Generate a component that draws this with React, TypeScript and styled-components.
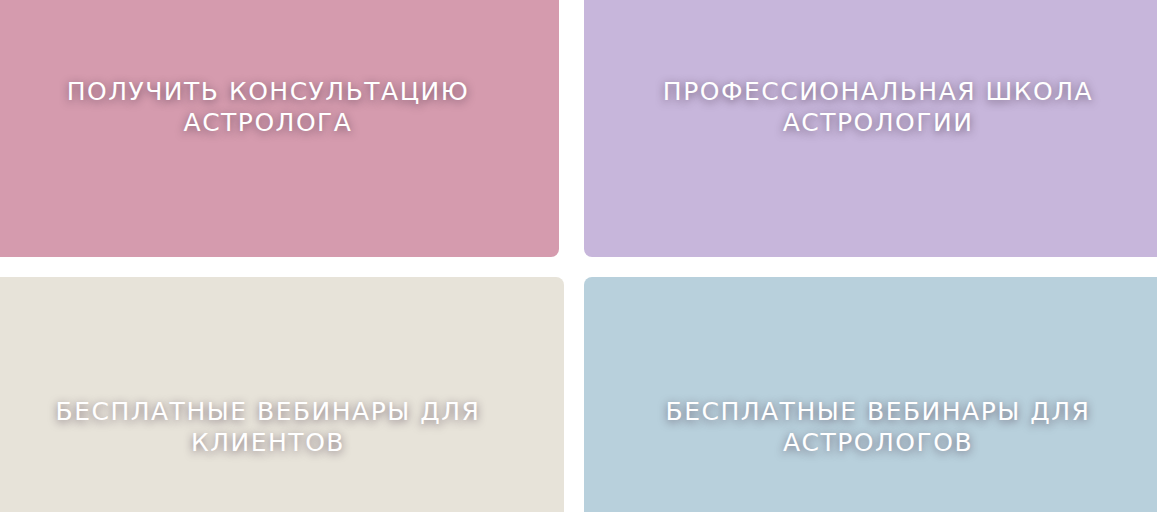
import styled, { createGlobalStyle } from "styled-components";

const GlobalStyle = createGlobalStyle`
  html, body {
    margin: 0;
    padding: 0;
    overflow: hidden;
    background: #ffffff;
  }
`;

const cards = [
  { title: "Получить консультацию астролога", color: "#d59bae", trim: "0 25px 0 5px" },
  { title: "Профессиональная школа астрологии", color: "#c7b6db", trim: "0" },
  { title: "Бесплатные вебинары для клиентов", color: "#e7e3d9", trim: "0 20px 0 0" },
  { title: "Бесплатные вебинары для астрологов", color: "#b8d0dc", trim: "0" },
];

export default function App() {
  return (
    <>
      <GlobalStyle />
      <Grid>
        {cards.map((c) => (
          <Card key={c.title} $color={c.color} $trim={c.trim}>
            <Title>{c.title}</Title>
          </Card>
        ))}
      </Grid>
    </>
  );
}

const Grid = styled.div`
  display: grid;
  grid-template-columns: 612px 588px;
  grid-auto-rows: 300px;
  row-gap: 20px;

  margin: -43px 0 0 -28px;
`;

const Card = styled.a<{ $color: string; $trim: string }>`
  display: flex;
  align-items: center;
  justify-content: center;

  margin: ${({ $trim }) => $trim};
  padding: 0 30px;
  border-radius: 8px;

  background-color: ${({ $color }) => $color};

  text-decoration: none;
  cursor: pointer;
`;

const Title = styled.h2`
  margin: 0;
  max-width: 480px;

  font-family: "DejaVu Sans", sans-serif;
  font-size: 25px;
  font-weight: 400;
  letter-spacing: 1.5px;
  line-height: 31px;
  text-align: center;
  text-transform: uppercase;
  color: #ffffff;
  text-shadow: 0 2px 8px rgba(60, 40, 60, 0.65);
`;
